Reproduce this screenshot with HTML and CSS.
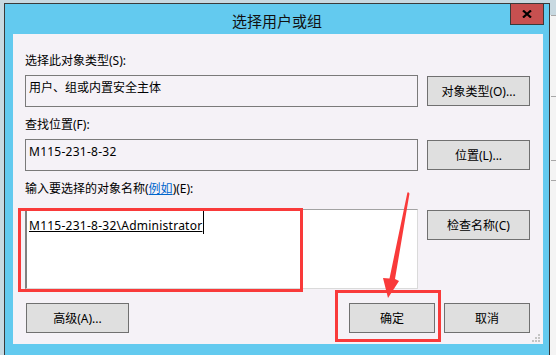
FILE: index.html
```html
<!DOCTYPE html>
<html lang="zh-CN">
<head>
    <meta charset="UTF-8">
    <title>选择用户或组</title>
    <link rel="stylesheet" href="styles.css">
</head>
<body>
    <div class="window">
        <div class="titlebar">
            <span></span>
            <span class="title">选择用户或组</span>
            <button class="close" aria-label="关闭">
                <svg width="10" height="8" viewBox="0 0 10 8"><path d="M1 0.5 L9 7.5 M9 0.5 L1 7.5" stroke="#000" stroke-width="2.2" fill="none"/></svg>
            </button>
        </div>

        <div class="client">
            <div class="label">选择此对象类型(S):</div>
            <div class="row">
                <div class="field">用户、组或内置安全主体</div>
                <button class="btn">对象类型(O)...</button>
            </div>

            <div class="label">查找位置(F):</div>
            <div class="row">
                <div class="field latin">M115-231-8-32</div>
                <button class="btn">位置(L)...</button>
            </div>

            <div class="label">输入要选择的对象名称(<a href="#">例如</a>)(E):</div>
            <div class="row row-names">
                <div class="names"><span class="resolved">M115-231-8-32\Administrator</span><span class="caret"></span></div>
                <button class="btn btn-top">检查名称(C)</button>
            </div>

            <div class="actions">
                <button class="btn btn-advanced">高级(A)...</button>
                <span class="spacer"></span>
                <button class="btn btn-small">确定</button>
                <button class="btn btn-small">取消</button>
            </div>

            <!-- resize grip -->
            <svg class="grip" width="9" height="8" viewBox="0 0 9 8">
                <rect x="6" y="0" width="2" height="2" fill="#c4c4c4"/>
                <rect x="3" y="3" width="2" height="2" fill="#c4c4c4"/>
                <rect x="6" y="3" width="2" height="2" fill="#c4c4c4"/>
                <rect x="0" y="6" width="2" height="2" fill="#c4c4c4"/>
                <rect x="3" y="6" width="2" height="2" fill="#c4c4c4"/>
                <rect x="6" y="6" width="2" height="2" fill="#c4c4c4"/>
            </svg>
        </div>
    </div>

    <!-- red annotations drawn over the dialog -->
    <svg class="marks" width="556" height="355" viewBox="0 0 556 355">
        <rect x="19.5" y="209.5" width="282" height="81" fill="none" stroke="#f93a3a" stroke-width="3"/>
        <rect x="336.5" y="291.5" width="103" height="49" fill="none" stroke="#f93a3a" stroke-width="3"/>
        <polygon points="408,192 409.5,193.5 395,279 399,281 388,298 383,278 389.5,278.5 407.3,193" fill="#f93a3a"/>
    </svg>
</body>
</html>
```

FILE: styles.css
```css
/* Reset */
body {
    margin: 0;
    padding: 0;
    position: relative;
    height: 355px;
    overflow: hidden;
    font-family: 'Noto Sans', 'Noto Sans CJK SC', sans-serif;
    font-size: 12px;
    color: #000;
    /* desktop behind the dialog */
    background:
        linear-gradient(#a8a8a8, #a8a8a8) 551px 15px / 5px 1px no-repeat,
        linear-gradient(#a8a8a8, #a8a8a8) 551px 96px / 5px 1px no-repeat,
        linear-gradient(#a8a8a8, #a8a8a8) 551px 160px / 5px 1px no-repeat,
        linear-gradient(#a8a8a8, #a8a8a8) 551px 180px / 5px 1px no-repeat,
        linear-gradient(#f4f4f4, #f4f4f4) 550px 15px / 6px 340px no-repeat,
        linear-gradient(#eeeeee, #eeeeee) 16px 352px / 10px 3px no-repeat,
        #c8d9e1;
}

/* Dialog frame */
.window {
    width: 530px;
    height: 347px;
    margin: 3px 0 0 4px;
    padding: 0 6px 7px 8px;
    border: 1px solid #3a3a3a;
    background-color: #63caef;
}

.titlebar {
    height: 30px;
    margin: 0 -6px 0 -8px;
    padding: 0 5px 0 5px;
    display: grid;
    grid-template-columns: 1fr auto 1fr;
    align-items: start;
}

.title {
    padding-top: 7px;
    font-family: 'Noto Sans CJK SC', sans-serif;
    font-size: 15px;
    line-height: 20px;
    color: #111;
}

.close {
    justify-self: end;
    width: 34px;
    height: 21px;
    padding: 0;
    border: 1px solid #3a3a3a;
    border-top: 0;
    background-color: #c75050;
    display: flex;
    align-items: center;
    justify-content: center;
}

/* Client area */
.client {
    position: relative;
    height: 310px;
    box-sizing: border-box;
    padding: 19px 13px 0 12px;
    background-color: #f5f2f7;
}

.label {
    height: 16px;
    line-height: 16px;
    margin-top: 10px;
}

.label:first-child {
    margin-top: 0;
}

.label a {
    color: #0066cc;
}

.row {
    display: flex;
    align-items: center;
    gap: 9px;
    margin-top: 6px;
}

.row-names {
    align-items: flex-start;
    margin-top: 12px;
}

.field {
    flex: 1;
    height: 32px;
    box-sizing: border-box;
    padding: 4px 3px;
    line-height: 16px;
    border: 1px solid #7a7a7a;
    background-color: #f5f2f7;
}

.latin {
    letter-spacing: 0.25px;
}

.names {
    flex: 1;
    height: 80px;
    box-sizing: border-box;
    padding: 8px 2px;
    line-height: 16px;
    background-color: #fff;
    border: 1px solid #dadada;
    border-top-color: #a3a3a3;
    border-left: 2px solid #808080;
}

.resolved {
    text-decoration: underline;
    letter-spacing: 0.25px;
}

.caret {
    display: inline-block;
    width: 1px;
    height: 23px;
    margin-top: -7px;
    margin-left: 1px;
    vertical-align: -4px;
    background-color: #000;
}

/* Buttons */
.btn {
    width: 103px;
    height: 30px;
    padding: 0;
    border: 1px solid #707070;
    background-color: #dfdfdf;
    font-family: 'Noto Sans', 'Noto Sans CJK SC', sans-serif;
    font-size: 12px;
    color: #000;
}

.btn-top {
    margin-top: 1px;
}

.actions {
    display: flex;
    gap: 9px;
    margin-top: 14px;
}

.btn-advanced {
    margin-left: 1px;
}

.btn-small {
    width: 86px;
}

.spacer {
    flex: 1;
}

.grip {
    position: absolute;
    right: 2px;
    bottom: 2px;
}

.marks {
    position: absolute;
    left: 0;
    top: 0;
    pointer-events: none;
}
```
